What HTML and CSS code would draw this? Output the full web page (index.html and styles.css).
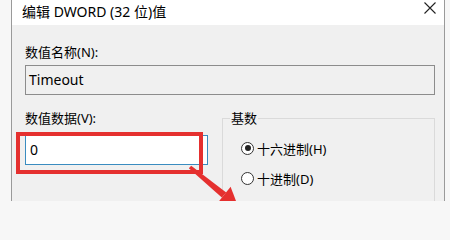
FILE: index.html
```html
<!DOCTYPE html>
<html lang="zh-CN">
<head>
<meta charset="utf-8">
<title>编辑 DWORD (32 位)值</title>
<link rel="stylesheet" href="styles.css">
</head>
<body>
<div class="window">
  <div class="titlebar">
    <span class="title">编辑 DWORD (32 位)值</span>
    <svg class="close" width="12" height="12" viewBox="0 0 12 12"><path d="M0.5 0.5 L11.5 11.5 M11.5 0.5 L0.5 11.5" stroke="#222" stroke-width="1.1" fill="none"/></svg>
  </div>
  <div class="content">
    <div class="label">数值名称(N):</div>
    <div class="field readonly">Timeout</div>
    <div class="row">
      <div class="col">
        <div class="label">数值数据(V):</div>
        <div class="field value">0</div>
      </div>
      <fieldset class="group">
        <legend>基数</legend>
        <div class="radio"><span class="circle checked"></span><span>十六进制(H)</span></div>
        <div class="radio"><span class="circle"></span><span>十进制(D)</span></div>
      </fieldset>
    </div>
  </div>
</div>
<div class="highlight"></div>
<svg class="arrow" width="450" height="201" viewBox="0 0 450 201">
  <polygon points="188.8,168.3 191.2,165.7 226.2,192.5 221.8,197.5" fill="#e5302f"/>
  <polygon points="230.6,186.8 217.4,203.2 238.5,207.5" fill="#e5302f"/>
</svg>
</body>
</html>
```
FILE: styles.css
```css
html, body {
  margin: 0;
  padding: 0;
  width: 450px;
  height: 201px;
  overflow: hidden;
}
body {
  background: #f7f7f7;
  font-family: "Noto Sans", "Noto Sans CJK SC", sans-serif;
  color: #000;
  position: relative;
}
.window {
  margin-left: 11px;
  width: 434px;
  height: 201px;
  overflow: hidden;
  border-left: 1px solid #9a9a9a;
  border-right: 1px solid #9a9a9a;
  background: #f0f0f0;
  box-sizing: border-box;
}
.titlebar {
  height: 25px;
  background: #fff;
  display: flex;
  justify-content: space-between;
  align-items: flex-start;
  padding: 0 8px 0 10px;
}
.title {
  font-size: 14px;
  line-height: 23px;
}
.close {
  margin-top: 2px;
}
.content {
  padding: 17px 9px 0 13px;
}
.label {
  font-size: 13px;
  line-height: 20px;
  height: 20px;
}
.field {
  box-sizing: border-box;
  height: 30px;
  margin-top: 3px;
  padding-left: 3px;
  font-size: 14px;
  line-height: 28px;
  border: 1px solid #8c8c8c;
}
.readonly {
  background: #f0f0f0;
}
.row {
  display: grid;
  grid-template-columns: 183px 213px;
  column-gap: 14px;
  margin-top: 13px;
}
.value {
  margin-top: 7px;
  background: #fff;
  border-color: #3a8cc0;
  padding-left: 4px;
}
.group {
  margin: 0;
  padding: 0 0 20px 7px;
  border: 1px solid #dadada;
  min-width: 0;
}
.group legend {
  font-size: 13px;
  line-height: 20px;
  padding: 0 1px;
}
.radio {
  display: flex;
  align-items: center;
  gap: 3px;
  height: 22px;
  font-size: 13px;
  margin-top: 8px;
  margin-left: 11px;
}
.radio:first-of-type {
  margin-top: 9px;
}
.circle {
  width: 13px;
  height: 13px;
  box-sizing: border-box;
  border: 1px solid #333;
  border-radius: 50%;
  background: #fff;
  display: flex;
  align-items: center;
  justify-content: center;
}
.circle.checked::after {
  content: "";
  width: 6px;
  height: 6px;
  border-radius: 50%;
  background: #222;
}
.highlight {
  position: absolute;
  left: 16px;
  top: 132px;
  width: 187px;
  height: 42px;
  box-sizing: border-box;
  border: 4px solid #e5302f;
}
.arrow {
  position: absolute;
  left: 0;
  top: 0;
  pointer-events: none;
}
```
